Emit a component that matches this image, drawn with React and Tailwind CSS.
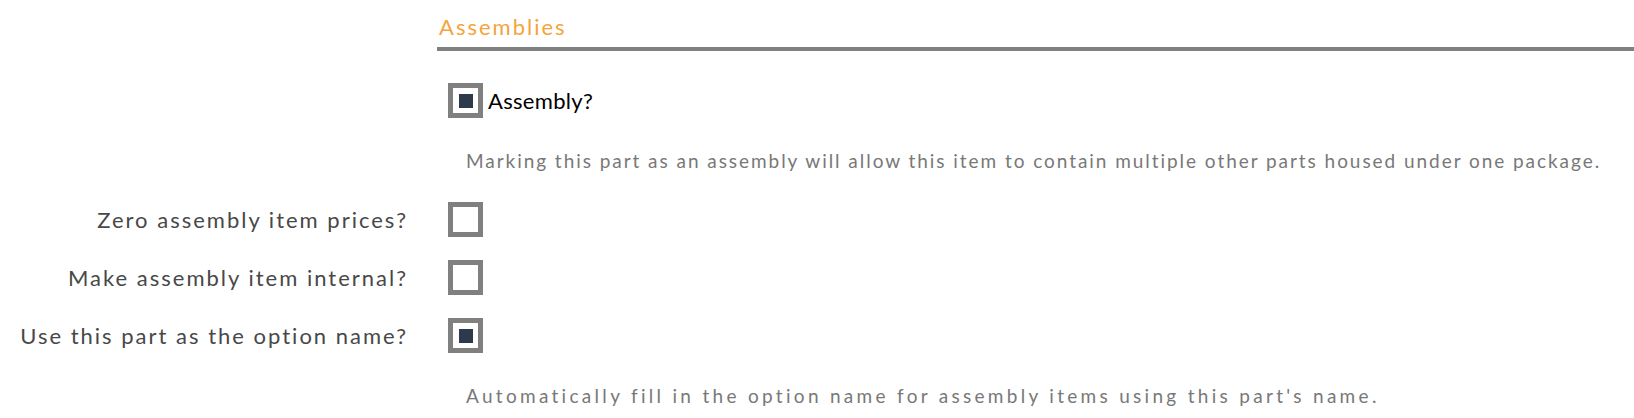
import React from "react";

function Check({ checked }) {
  return (
    <div className="w-[35px] h-[35px] border-[5px] border-[#808080] bg-white flex items-center justify-center shrink-0">
      {checked && <div className="w-[14px] h-[14px] bg-[#2d3a4b]" />}
    </div>
  );
}

function Row({ label, checked }) {
  return (
    <div className="flex items-center h-[35px]">
      <div className="w-[408px] text-right text-[22px] leading-none tracking-[2px] text-[#484848]">{label}</div>
      <div className="ml-[40px]">
        <Check checked={checked} />
      </div>
    </div>
  );
}

export default function App() {
  return (
    <div className="h-[418px] w-full bg-white overflow-hidden font-['Lato','Open_Sans',sans-serif]">
      {/* SECTION HEADER */}
      <div className="ml-[437px]">
        <div className="h-[47px] pt-[16px] pl-[2px] text-[22px] leading-none tracking-[2px] text-[#f4a43a]">Assemblies</div>
        <div className="h-[4px] bg-[#808080]" />
      </div>

      {/* ASSEMBLY TOGGLE */}
      <div className="ml-[448px] mt-[32px] flex items-center h-[35px]">
        <Check checked />
        <span className="ml-[5px] text-[22px] leading-none tracking-[0.3px] text-black">Assembly?</span>
      </div>
      <div className="h-[84px] pl-[466px] pt-[33px] text-[19px] leading-none tracking-[1.95px] text-[#787878]">
        Marking this part as an assembly will allow this item to contain multiple other parts housed under one package.
      </div>

      {/* OPTIONS */}
      <div className="flex flex-col gap-[23px]">
        <Row label="Zero assembly item prices?" />
        <Row label="Make assembly item internal?" />
        <Row label="Use this part as the option name?" checked />
      </div>
      <div className="pl-[466px] pt-[33px] text-[19px] leading-none tracking-[3.3px] text-[#787878]">
        Automatically fill in the option name for assembly items using this part's name.
      </div>
    </div>
  );
}
